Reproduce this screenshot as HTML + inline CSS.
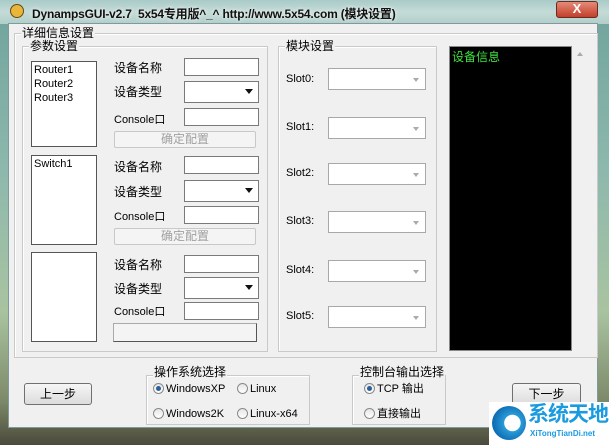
<!DOCTYPE html>
<html><head><meta charset="utf-8"><style>
*{box-sizing:border-box;margin:0;padding:0}
body{width:609px;height:445px;overflow:hidden;position:relative;font-family:"Liberation Sans","Noto Sans CJK SC",sans-serif;font-size:12px;color:#000;
background:linear-gradient(180deg,#6fa39c 0%,#8fb9ad 40%,#a9c3a0 70%,#7d8a6a 90%,#4a4a3a 100%)}
.a{position:absolute}
.title{left:0;top:0;width:609px;height:24px;background:linear-gradient(180deg,#a9cbc8,#c4dbd7 50%,#b2cfcb);}
.tt{left:32px;top:5px;font-size:12px;font-weight:bold;color:#111;letter-spacing:-0.2px;text-shadow:0 0 4px #fff}
.close{left:556px;top:1px;width:42px;height:17px;border-radius:3px;background:linear-gradient(#e58a78,#c2402b);border:1px solid #6b2b22;color:#fff;font-weight:bold;text-align:center;line-height:14px;font-size:13px}
.win{left:8px;top:23px;width:590px;height:405px;background:#f0f0f0;border:1px solid #7f9a98}
.grp{position:absolute;border:1px solid #c9c9c9;box-shadow:inset 1px 1px 0 #fff}
.lg{position:absolute;top:-9px;left:6px;background:#f0f0f0;padding:0 1px;font-size:12px;line-height:16px}
.box{position:absolute;background:#fff;border:1px solid #7a7a7a}
.lst{position:absolute;background:#fff;border:1px solid #555;padding:1px 2px;font-size:11px;line-height:14px}
.lb{position:absolute;font-size:12px}
.lbs{position:absolute;font-size:11px}
.cb{position:absolute;background:#fff;border:1px solid #7a7a7a}
.cb:after{content:"";position:absolute;right:5px;top:7px;border:4px solid transparent;border-top:5px solid #111;border-bottom:0}
.cbg{position:absolute;background:#fff;border:1px solid #a8a8a8}
.cbg:after{content:"";position:absolute;right:6px;top:9px;border:3px solid transparent;border-top:4px solid #aaa;border-bottom:0}
.btnd{position:absolute;border:1px solid #c8c8c8;border-radius:2px;background:#f4f4f4;color:#a0a0a0;text-align:center;font-size:12px;line-height:15px}
.btn{position:absolute;border:1px solid #707070;border-radius:3px;background:linear-gradient(#f6f6f6,#dcdcdc);text-align:center;font-size:12px;line-height:20px}
.r{position:absolute;font-size:11px;line-height:14px}
.r i{display:inline-block;width:11px;height:11px;border-radius:50%;border:1px solid #8a8a8a;background:linear-gradient(#e6e6e6,#fff);vertical-align:-2px;margin-right:2px;position:relative}
.r i.on:after{content:"";position:absolute;left:2px;top:2px;width:5px;height:5px;border-radius:50%;background:#2a5f9a}
</style></head><body>
<div class="a title"></div>
<div class="a" style="left:10px;top:4px;width:14px;height:14px;border-radius:50%;background:#e7b63a;border:1px solid #6b4a10"></div>
<div class="a tt">DynampsGUI-v2.7&nbsp; 5x54专用版^_^ http://www.5x54.com (模块设置)</div>
<div class="a close">X</div>
<div class="a win"></div>

<div class="grp" style="left:14px;top:33px;width:584px;height:325px"><span class="lg">详细信息设置</span></div>
<div class="grp" style="left:22px;top:46px;width:246px;height:306px"><span class="lg">参数设置</span></div>
<div class="grp" style="left:278px;top:46px;width:159px;height:306px"><span class="lg">模块设置</span></div>

<div class="lst" style="left:31px;top:61px;width:66px;height:86px">Router1<br>Router2<br>Router3</div>
<div class="lst" style="left:31px;top:155px;width:66px;height:90px">Switch1</div>
<div class="lst" style="left:31px;top:252px;width:66px;height:90px"></div>

<div class="lb" style="left:114px;top:59px">设备名称</div><div class="box" style="left:184px;top:58px;width:75px;height:18px"></div>
<div class="lb" style="left:114px;top:83px">设备类型</div><div class="cb" style="left:184px;top:81px;width:75px;height:22px"></div>
<div class="lbs" style="left:114px;top:111px">Console口</div><div class="box" style="left:184px;top:108px;width:75px;height:18px"></div>
<div class="btnd" style="left:114px;top:131px;width:142px;height:17px">确定配置</div>

<div class="lb" style="left:114px;top:158px">设备名称</div><div class="box" style="left:184px;top:156px;width:75px;height:18px"></div>
<div class="lb" style="left:114px;top:183px">设备类型</div><div class="cb" style="left:184px;top:180px;width:75px;height:22px"></div>
<div class="lbs" style="left:114px;top:208px">Console口</div><div class="box" style="left:184px;top:206px;width:75px;height:18px"></div>
<div class="btnd" style="left:114px;top:228px;width:142px;height:17px">确定配置</div>

<div class="lb" style="left:114px;top:256px">设备名称</div><div class="box" style="left:184px;top:255px;width:75px;height:18px"></div>
<div class="lb" style="left:114px;top:280px">设备类型</div><div class="cb" style="left:184px;top:277px;width:75px;height:22px"></div>
<div class="lbs" style="left:114px;top:303px">Console口</div><div class="box" style="left:184px;top:302px;width:75px;height:18px"></div>
<div class="btnd" style="left:113px;top:323px;width:144px;height:19px;border-color:#aaa;border-right-color:#555;border-bottom-color:#555;border-radius:0"></div>

<div class="lbs" style="left:286px;top:73px">Slot0:</div><div class="cbg" style="left:328px;top:68px;width:98px;height:22px"></div>
<div class="lbs" style="left:286px;top:121px">Slot1:</div><div class="cbg" style="left:328px;top:117px;width:98px;height:22px"></div>
<div class="lbs" style="left:286px;top:167px">Slot2:</div><div class="cbg" style="left:328px;top:163px;width:98px;height:22px"></div>
<div class="lbs" style="left:286px;top:215px">Slot3:</div><div class="cbg" style="left:328px;top:211px;width:98px;height:22px"></div>
<div class="lbs" style="left:286px;top:264px">Slot4:</div><div class="cbg" style="left:328px;top:260px;width:98px;height:22px"></div>
<div class="lbs" style="left:286px;top:310px">Slot5:</div><div class="cbg" style="left:328px;top:306px;width:98px;height:22px"></div>

<div class="a" style="left:449px;top:46px;width:123px;height:305px;background:#000;border:1px solid #888;color:#3ee03e;font-size:12px;padding:1px 2px">设备信息</div>
<div class="a" style="left:572px;top:46px;width:18px;height:305px;background:#f0f0f0"></div>
<div class="a" style="left:577px;top:52px;border:3px solid transparent;border-bottom:4px solid #aaa;border-top:0"></div>

<div class="btn" style="left:24px;top:383px;width:68px;height:22px">上一步</div>
<div class="btn" style="left:512px;top:383px;width:69px;height:22px">下一步</div>

<div class="grp" style="left:146px;top:375px;width:164px;height:50px"><span class="lg" style="top:-12px">操作系统选择</span></div>
<div class="r" style="left:153px;top:382px"><i class="on"></i>WindowsXP</div>
<div class="r" style="left:237px;top:382px"><i></i>Linux</div>
<div class="r" style="left:153px;top:407px"><i></i>Windows2K</div>
<div class="r" style="left:237px;top:407px"><i></i>Linux-x64</div>

<div class="grp" style="left:352px;top:375px;width:94px;height:50px"><span class="lg" style="top:-12px;left:6px">控制台输出选择</span></div>
<div class="r" style="left:364px;top:382px"><i class="on"></i>TCP 输出</div>
<div class="r" style="left:364px;top:407px"><i></i>直接输出</div>

<div class="a" style="left:489px;top:402px;width:120px;height:43px;background:#fff"></div>
<div class="a" style="left:492px;top:406px;width:34px;height:34px;border-radius:50%;background:radial-gradient(circle at 60% 50%,#fff 30%,#2a9ad8 32%,#0f6fb5 70%)"></div>
<div class="a" style="left:528px;top:402px;font-size:21px;font-weight:bold;color:#1a9be0;letter-spacing:-1px;line-height:26px">系统天地</div>
<div class="a" style="left:530px;top:429px;font-size:8px;font-weight:bold;color:#1a9be0">XiTongTianDi.net</div>
</body></html>
